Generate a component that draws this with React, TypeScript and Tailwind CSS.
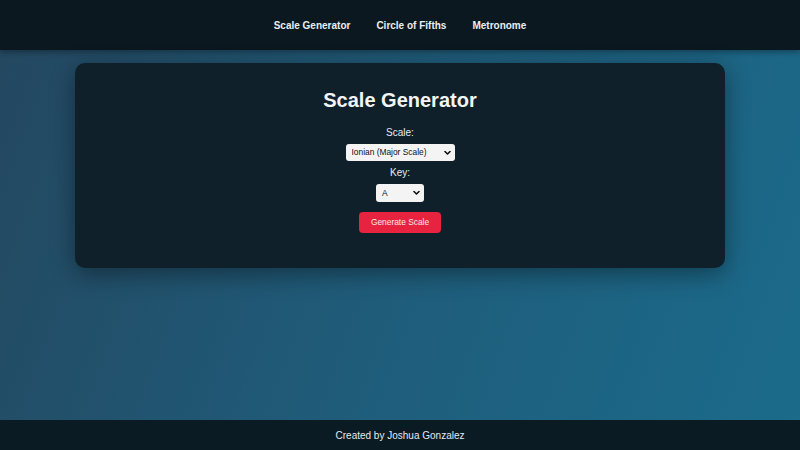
import { FC } from 'react';

const navLinks = ['Scale Generator', 'Circle of Fifths', 'Metronome'];

const scales = [
  'Ionian (Major Scale)',
  'Dorian',
  'Phrygian',
  'Lydian',
  'Mixolydian',
  'Aeolian (Minor Scale)',
  'Locrian',
];

const keys = ['A', 'A#', 'B', 'C', 'C#', 'D', 'D#', 'E', 'F', 'F#', 'G', 'G#'];

const Chevron: FC = () => (
  <svg
    className="pointer-events-none absolute right-[4px] top-1/2 -translate-y-1/2"
    width="7"
    height="5"
    viewBox="0 0 7 5"
    fill="none"
  >
    <path d="M1 1l2.5 2.5L6 1" stroke="#111" strokeWidth="1.6" strokeLinecap="round" strokeLinejoin="round" />
  </svg>
);

const Dropdown: FC<{ options: string[]; width: string }> = ({ options, width }) => (
  <div className={`relative ${width}`}>
    <select className="h-full w-full appearance-none rounded-[3px] bg-[#f4f4f4] pl-[6px] pr-[14px] font-['Liberation_Sans',Arial,sans-serif] text-[8.4px] text-[#111] outline-none">
      {options.map((o) => (
        <option key={o}>{o}</option>
      ))}
    </select>
    <Chevron />
  </div>
);

export default function App() {
  return (
    <div className="flex h-[450px] w-[800px] flex-col bg-[linear-gradient(110deg,#24475f_0%,#1f5c7a_50%,#1b6b8b_100%)] font-['Liberation_Sans',Arial,sans-serif] text-[10px] text-[#e6ecef]">
      <header className="flex h-[50px] shrink-0 items-center justify-center gap-[26px] bg-[#0b1820] shadow-[0_2px_6px_rgba(0,0,0,0.35)]">
        {navLinks.map((link) => (
          <a key={link} className="mt-[1px] font-bold leading-none text-[#e9eef1]">
            {link}
          </a>
        ))}
      </header>

      <main className="flex-1 px-[75px] pt-[13px]">
        <div className="flex h-[205px] flex-col items-center rounded-[10px] bg-[#0f202b] pt-[26px] shadow-[0_6px_24px_rgba(0,0,0,0.4)]">
          <h1 className="text-[20px] font-bold leading-[23px] text-[#f2f5f6]">Scale Generator</h1>
          <label className="mt-[15px] leading-[12px]">Scale:</label>
          <div className="mt-[5px] h-[17px]">
            <Dropdown options={scales} width="w-[109px] h-[17px]" />
          </div>
          <label className="mt-[6px] leading-[12px]">Key:</label>
          <div className="mt-[5px] h-[18px]">
            <Dropdown options={keys} width="w-[48px] h-[18px]" />
          </div>
          <button className="mt-[10px] h-[21px] w-[82px] rounded-[4px] bg-[#e8233f] font-['Liberation_Sans',Arial,sans-serif] text-[8.4px] text-[#fbe9ec]">
            Generate Scale
          </button>
        </div>
      </main>

      <footer className="flex h-[30px] shrink-0 items-center justify-center bg-[#0a1b24] pt-[1px] leading-none text-[#e4eaed]">
        Created by Joshua Gonzalez
      </footer>
    </div>
  );
}
